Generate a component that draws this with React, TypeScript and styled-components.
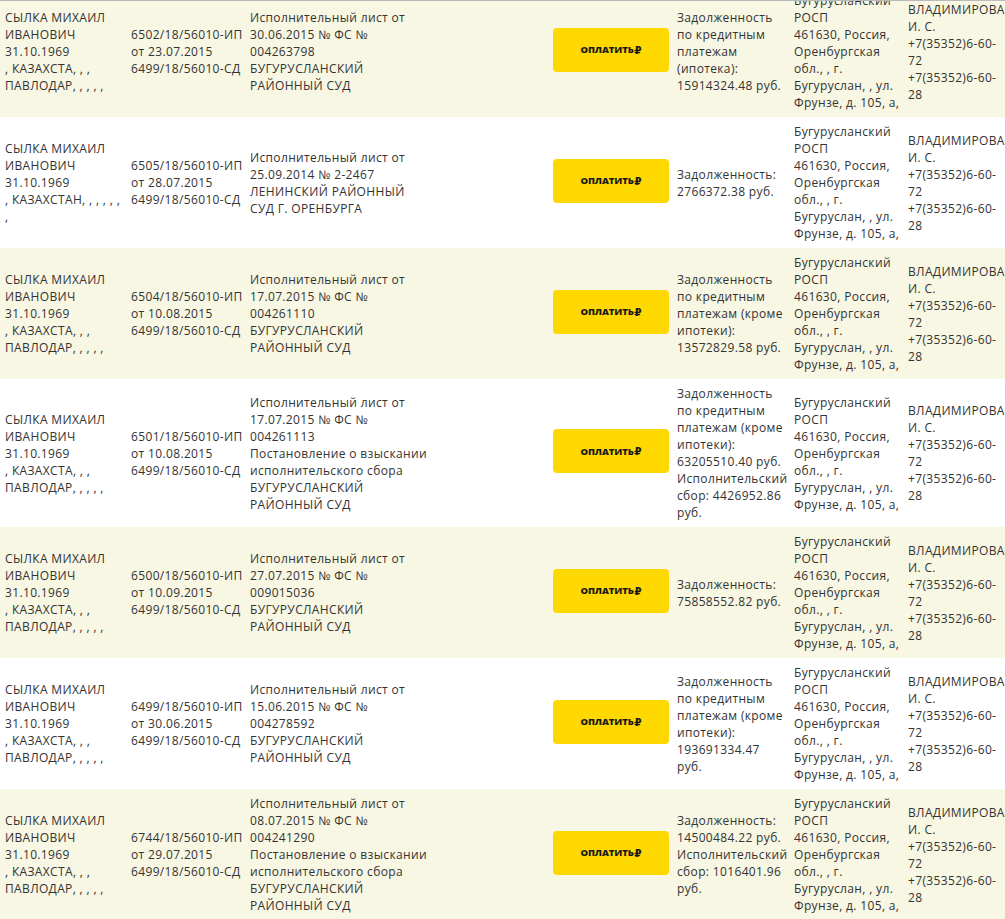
import React from "react";
import styled, { createGlobalStyle } from "styled-components";

const Global = createGlobalStyle`
  html, body {
    margin: 0;
    padding: 0;
    background: #ffffff;
    overflow: hidden;
  }
  body {
    font-family: "Open Sans", "Noto Sans", "DejaVu Sans", sans-serif;
    font-size: 12px;
    line-height: 17px;
    letter-spacing: 0.35px;
    color: #333333;
  }
`;

const Viewport = styled.div`
  width: 1005px;
  height: 918px;
  overflow: hidden;
  border-top: 1px solid #b9b9b9;
`;

const Table = styled.table`
  table-layout: fixed;
  border-collapse: collapse;
  border-spacing: 0;
  width: 1005px;
  margin-top: -15px;
`;

const Row = styled.tr<{ $shade: boolean }>`
  background: ${(p) => (p.$shade ? "#f8f7e3" : "#ffffff")};
`;

const Cell = styled.td`
  padding: 6px 2px 6px 5px;
  vertical-align: middle;
  text-align: left;
  overflow: visible;
  word-wrap: normal;
`;

const ButtonCell = styled.td`
  padding: 0 3px 0 0;
  vertical-align: middle;
`;

const ButtonWrap = styled.div`
  display: flex;
  justify-content: flex-end;
  margin-bottom: 4px;
`;

const PayButton = styled.button`
  width: 116px;
  height: 44px;
  border: none;
  border-radius: 4px;
  background: #ffd800;
  color: #1a1a1a;
  font-family: "Open Sans", "DejaVu Sans", sans-serif;
  font-weight: 800;
  font-size: 9.5px;
  letter-spacing: -0.1px;
  text-transform: uppercase;
  cursor: pointer;
  display: inline-flex;
  align-items: center;
  justify-content: center;
  padding: 0;
`;

const Rub = styled.span`
  font-family: "DejaVu Sans", sans-serif;
  font-weight: 700;
  font-size: 10.5px;
  margin-left: 0.5px;
`;

const Line = styled.div<{ $nowrap?: boolean }>`
  white-space: ${(p) => (p.$nowrap ? "nowrap" : "normal")};
`;

type Debtor = {
  country: string;
  ip: string;
  date: string;
  doc: string[];
  debt: string[];
};

const rows: Debtor[] = [
  {
    country: ", КАЗАХСТА, , , ПАВЛОДАР, , , , ,",
    ip: "6502/18/56010-ИП",
    date: "от 23.07.2015",
    doc: ["Исполнительный лист от 30.06.2015 № ФС № 004263798", "БУГУРУСЛАНСКИЙ РАЙОННЫЙ СУД"],
    debt: ["Задолженность по кредитным платежам (ипотека): 15914324.48 руб."],
  },
  {
    country: ", КАЗАХСТАН, , , , , , ,",
    ip: "6505/18/56010-ИП",
    date: "от 28.07.2015",
    doc: ["Исполнительный лист от 25.09.2014 № 2-2467", "ЛЕНИНСКИЙ РАЙОННЫЙ СУД Г. ОРЕНБУРГА"],
    debt: ["Задолженность: 2766372.38 руб."],
  },
  {
    country: ", КАЗАХСТА, , , ПАВЛОДАР, , , , ,",
    ip: "6504/18/56010-ИП",
    date: "от 10.08.2015",
    doc: ["Исполнительный лист от 17.07.2015 № ФС № 004261110", "БУГУРУСЛАНСКИЙ РАЙОННЫЙ СУД"],
    debt: ["Задолженность по кредитным платежам (кроме ипотеки): 13572829.58 руб."],
  },
  {
    country: ", КАЗАХСТА, , , ПАВЛОДАР, , , , ,",
    ip: "6501/18/56010-ИП",
    date: "от 10.08.2015",
    doc: [
      "Исполнительный лист от 17.07.2015 № ФС № 004261113",
      "Постановление о взыскании исполнительского сбора",
      "БУГУРУСЛАНСКИЙ РАЙОННЫЙ СУД",
    ],
    debt: [
      "Задолженность по кредитным платежам (кроме ипотеки): 63205510.40 руб.",
      "Исполнительский сбор: 4426952.86 руб.",
    ],
  },
  {
    country: ", КАЗАХСТА, , , ПАВЛОДАР, , , , ,",
    ip: "6500/18/56010-ИП",
    date: "от 10.09.2015",
    doc: ["Исполнительный лист от 27.07.2015 № ФС № 009015036", "БУГУРУСЛАНСКИЙ РАЙОННЫЙ СУД"],
    debt: ["Задолженность: 75858552.82 руб."],
  },
  {
    country: ", КАЗАХСТА, , , ПАВЛОДАР, , , , ,",
    ip: "6499/18/56010-ИП",
    date: "от 30.06.2015",
    doc: ["Исполнительный лист от 15.06.2015 № ФС № 004278592", "БУГУРУСЛАНСКИЙ РАЙОННЫЙ СУД"],
    debt: ["Задолженность по кредитным платежам (кроме ипотеки): 193691334.47 руб."],
  },
  {
    country: ", КАЗАХСТА, , , ПАВЛОДАР, , , , ,",
    ip: "6744/18/56010-ИП",
    date: "от 29.07.2015",
    doc: [
      "Исполнительный лист от 08.07.2015 № ФС № 004241290",
      "Постановление о взыскании исполнительского сбора",
      "БУГУРУСЛАНСКИЙ РАЙОННЫЙ СУД",
    ],
    debt: ["Задолженность: 14500484.22 руб.", "Исполнительский сбор: 1016401.96 руб."],
  },
];

const Phone: React.FC<{ tail: string }> = ({ tail }) => (
  <Line>
    +7(35352)6-60-
    <wbr />
    {tail}
  </Line>
);

export default function App() {
  return (
    <>
      <Global />
      <Viewport>
        <Table>
          <colgroup>
            <col style={{ width: 126 }} />
            <col style={{ width: 119 }} />
            <col style={{ width: 186 }} />
            <col style={{ width: 241 }} />
            <col style={{ width: 117 }} />
            <col style={{ width: 114 }} />
            <col style={{ width: 102 }} />
          </colgroup>
          <tbody>
            {rows.map((r, i) => (
              <Row key={i} $shade={i % 2 === 0}>
                <Cell>
                  <Line>СЫЛКА МИХАИЛ ИВАНОВИЧ</Line>
                  <Line>31.10.1969</Line>
                  <Line>{r.country}</Line>
                </Cell>
                <Cell>
                  <Line $nowrap>{r.ip}</Line>
                  <Line $nowrap>{r.date}</Line>
                  <Line $nowrap>6499/18/56010-СД</Line>
                </Cell>
                <Cell>
                  {r.doc.map((d, j) => (
                    <Line key={j}>{d}</Line>
                  ))}
                </Cell>
                <ButtonCell>
                  <ButtonWrap>
                    <PayButton type="button">
                      Оплатить<Rub>₽</Rub>
                    </PayButton>
                  </ButtonWrap>
                </ButtonCell>
                <Cell>
                  {r.debt.map((d, j) => (
                    <Line key={j}>{d}</Line>
                  ))}
                </Cell>
                <Cell>
                  <Line>Бугурусланский РОСП</Line>
                  <Line>461630, Россия, Оренбургская обл., , г. Бугуруслан, , ул. Фрунзе, д. 105, а,</Line>
                </Cell>
                <Cell style={{ paddingRight: 5 }}>
                  <Line>ВЛАДИМИРОВА И. С.</Line>
                  <Phone tail="72" />
                  <Phone tail="28" />
                </Cell>
              </Row>
            ))}
          </tbody>
        </Table>
      </Viewport>
    </>
  );
}
